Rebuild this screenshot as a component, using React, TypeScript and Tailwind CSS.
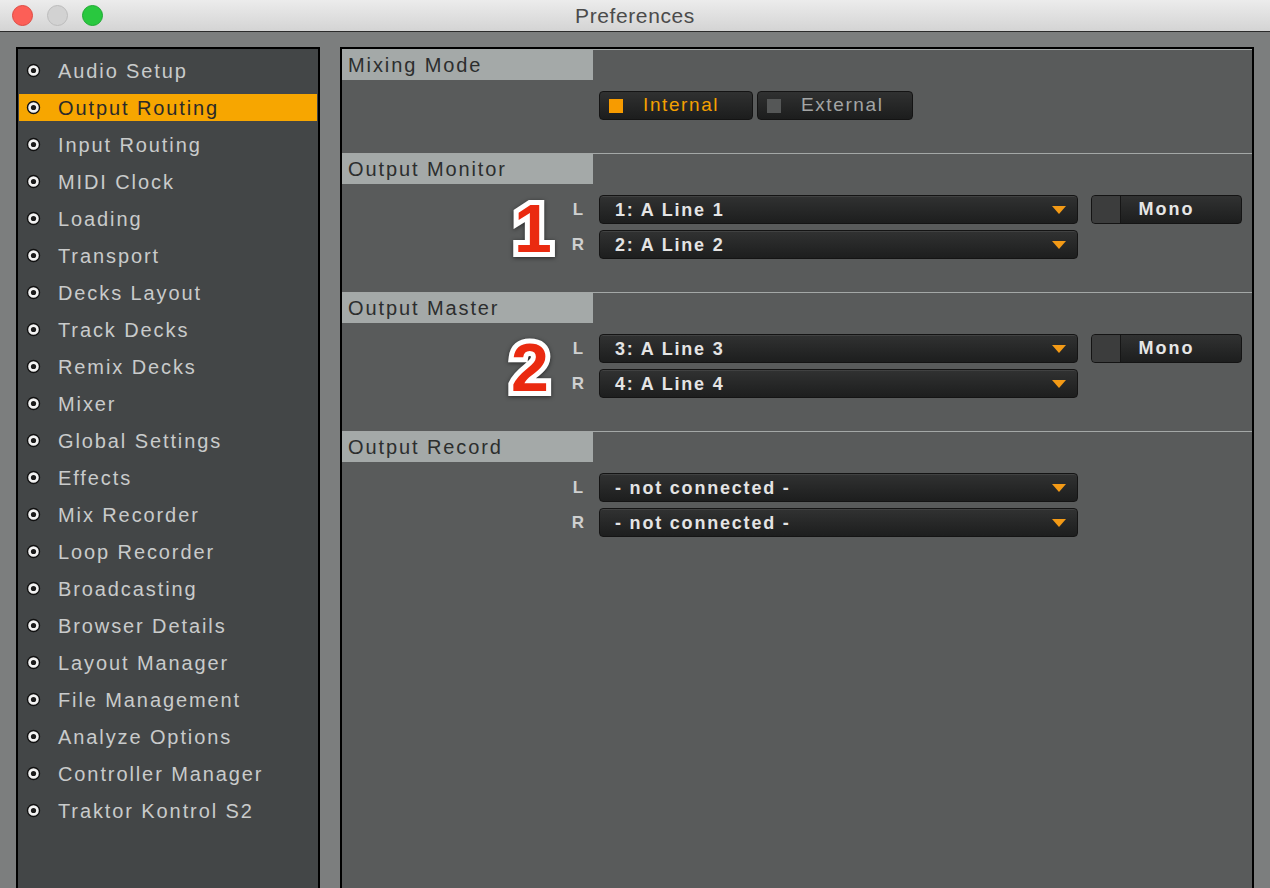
import React from 'react';

const NAV_ITEMS = [
  'Audio Setup',
  'Output Routing',
  'Input Routing',
  'MIDI Clock',
  'Loading',
  'Transport',
  'Decks Layout',
  'Track Decks',
  'Remix Decks',
  'Mixer',
  'Global Settings',
  'Effects',
  'Mix Recorder',
  'Loop Recorder',
  'Broadcasting',
  'Browser Details',
  'Layout Manager',
  'File Management',
  'Analyze Options',
  'Controller Manager',
  'Traktor Kontrol S2',
];

const FONT = "font-['Liberation_Sans',Arial,sans-serif]";

function RadioDot() {
  return (
    <svg width="15" height="15" viewBox="0 0 15 15" className="shrink-0">
      <circle cx="7.5" cy="7.5" r="6" fill="#f2f2f2" stroke="#111" strokeWidth="1.4" />
      <circle cx="7.5" cy="7.5" r="2.6" fill="#1a1a1a" />
    </svg>
  );
}

function DropArrow() {
  return (
    <svg width="14" height="8" viewBox="0 0 14 8" className="shrink-0">
      <path d="M0 0 H14 L7 8 Z" fill="#f39a16" />
    </svg>
  );
}

function Sidebar() {
  return (
    <div className="w-[304px] h-[860px] shrink-0 border-2 border-black bg-[#434647] pt-[8px] px-[1px] flex flex-col gap-[10px]">
      {NAV_ITEMS.map((item) => {
        const active = item === 'Output Routing';
        return (
          <div
            key={item}
            className={`h-[27px] flex items-center pl-[7px] gap-[17px] ${
              active ? 'bg-[#f7a600] text-[#2a2a2a]' : 'text-[#c9cbcb]'
            }`}
          >
            <RadioDot />
            <span className="text-[20px] tracking-[1.9px] leading-none">{item}</span>
          </div>
        );
      })}
    </div>
  );
}

function SectionHeader({ title }: { title: string }) {
  return (
    <div className="border-t border-[#a4a8a7]">
      <div className="w-[251px] h-[30px] bg-[#a4a9a8] flex items-center pl-[6px] text-[20px] tracking-[1.9px] text-[#2c2e2e]">
        {title}
      </div>
    </div>
  );
}

function Dropdown({ value }: { value: string }) {
  return (
    <div className="w-[479px] h-[29px] rounded-[4px] border border-[#141414] bg-gradient-to-b from-[#313232] to-[#1d1e1e] shadow-[inset_0_1px_0_rgba(255,255,255,0.08)] flex items-center pl-[15px] pr-[11px]">
      <span className="flex-1 text-[18px] font-bold tracking-[1.8px] text-[#e4e4e4] leading-none">{value}</span>
      <DropArrow />
    </div>
  );
}

function MonoButton() {
  return (
    <div className="relative w-[151px] h-[29px] rounded-[4px] border border-[#141414] bg-gradient-to-b from-[#313232] to-[#1d1e1e] flex items-center justify-center overflow-hidden">
      <div className="absolute left-0 top-0 w-[29px] h-full bg-[#3c3d3d] border-r border-[#161616]" />
      <span className="text-[18px] font-bold tracking-[2px] text-[#e6e6e6]">Mono</span>
    </div>
  );
}

function ChannelRow({ side, value, mono }: { side: string; value: string; mono?: boolean }) {
  return (
    <div className="flex items-center">
      <div className="w-[20px] text-center text-[17px] font-bold text-[#cfd0d0]">{side}</div>
      <div className="ml-[11px]">
        <Dropdown value={value} />
      </div>
      {mono && (
        <div className="ml-[13px]">
          <MonoButton />
        </div>
      )}
    </div>
  );
}

function Callout({ n }: { n: string }) {
  return (
    <span className="absolute text-[68px] font-bold leading-none text-[#ea2a10] [-webkit-text-stroke:10px_#ffffff] [paint-order:stroke_fill] drop-shadow-[0_1px_2px_rgba(0,0,0,0.55)]">
      {n}
    </span>
  );
}

function OutputSection({
  title,
  left,
  right,
  mono,
  callout,
}: {
  title: string;
  left: string;
  right: string;
  mono?: boolean;
  callout?: string;
}) {
  return (
    <div className="h-[139px]">
      <SectionHeader title={title} />
      <div className="relative mt-[11px] pl-[226px] flex flex-col gap-[6px]">
        {callout && (
          <div className={`absolute top-[-1px] w-[50px] h-[64px] ${callout === '1' ? 'left-[172px]' : 'left-[169px]'}`}>
            <Callout n={callout} />
          </div>
        )}
        <ChannelRow side="L" value={left} mono={mono} />
        <ChannelRow side="R" value={right} />
      </div>
    </div>
  );
}

function MixingMode() {
  return (
    <div className="h-[104px]">
      <SectionHeader title="Mixing Mode" />
      <div className="mt-[11px] pl-[257px] flex gap-[4px]">
        <div className="w-[154px] h-[29px] rounded-[4px] border border-[#141414] bg-gradient-to-b from-[#303131] to-[#1c1d1d] flex items-center pl-[9px] gap-[20px]">
          <div className="w-[14px] h-[14px] bg-[#f79b00]" />
          <span className="text-[19px] tracking-[1.6px] text-[#f4a000]">Internal</span>
        </div>
        <div className="w-[156px] h-[29px] rounded-[4px] border border-[#141414] bg-gradient-to-b from-[#303131] to-[#1c1d1d] flex items-center pl-[9px] gap-[20px]">
          <div className="w-[14px] h-[14px] bg-[#555757]" />
          <span className="text-[19px] tracking-[1.6px] text-[#a3a5a5]">External</span>
        </div>
      </div>
    </div>
  );
}

function TitleBar() {
  return (
    <div className="relative h-[32px] shrink-0 bg-gradient-to-b from-[#ececec] to-[#d4d4d4] border-b border-[#2b2b2b] flex items-center justify-center">
      <div className="absolute left-[12px] top-[5px] flex gap-[14px]">
        <div className="w-[21px] h-[21px] rounded-full bg-[#fc5f57] border border-[#de4a42]" />
        <div className="w-[21px] h-[21px] rounded-full bg-[#d2d2d2] border border-[#bcbcbc]" />
        <div className="w-[21px] h-[21px] rounded-full bg-[#29c83f] border border-[#1ea932]" />
      </div>
      <span className="text-[21px] tracking-[0.6px] text-[#4b4b4b]">Preferences</span>
    </div>
  );
}

export default function App() {
  return (
    <div className={`w-[1270px] h-[888px] overflow-hidden bg-[#7c7e7e] flex flex-col ${FONT}`}>
      <TitleBar />
      <div className="flex pt-[15px] pl-[16px] gap-[20px]">
        <Sidebar />
        <div className="w-[914px] h-[860px] shrink-0 border-2 border-black bg-[#595b5b]">
          <MixingMode />
          <OutputSection title="Output Monitor" left="1: A Line 1" right="2: A Line 2" mono callout="1" />
          <OutputSection title="Output Master" left="3: A Line 3" right="4: A Line 4" mono callout="2" />
          <OutputSection title="Output Record" left="- not connected -" right="- not connected -" />
        </div>
      </div>
    </div>
  );
}
